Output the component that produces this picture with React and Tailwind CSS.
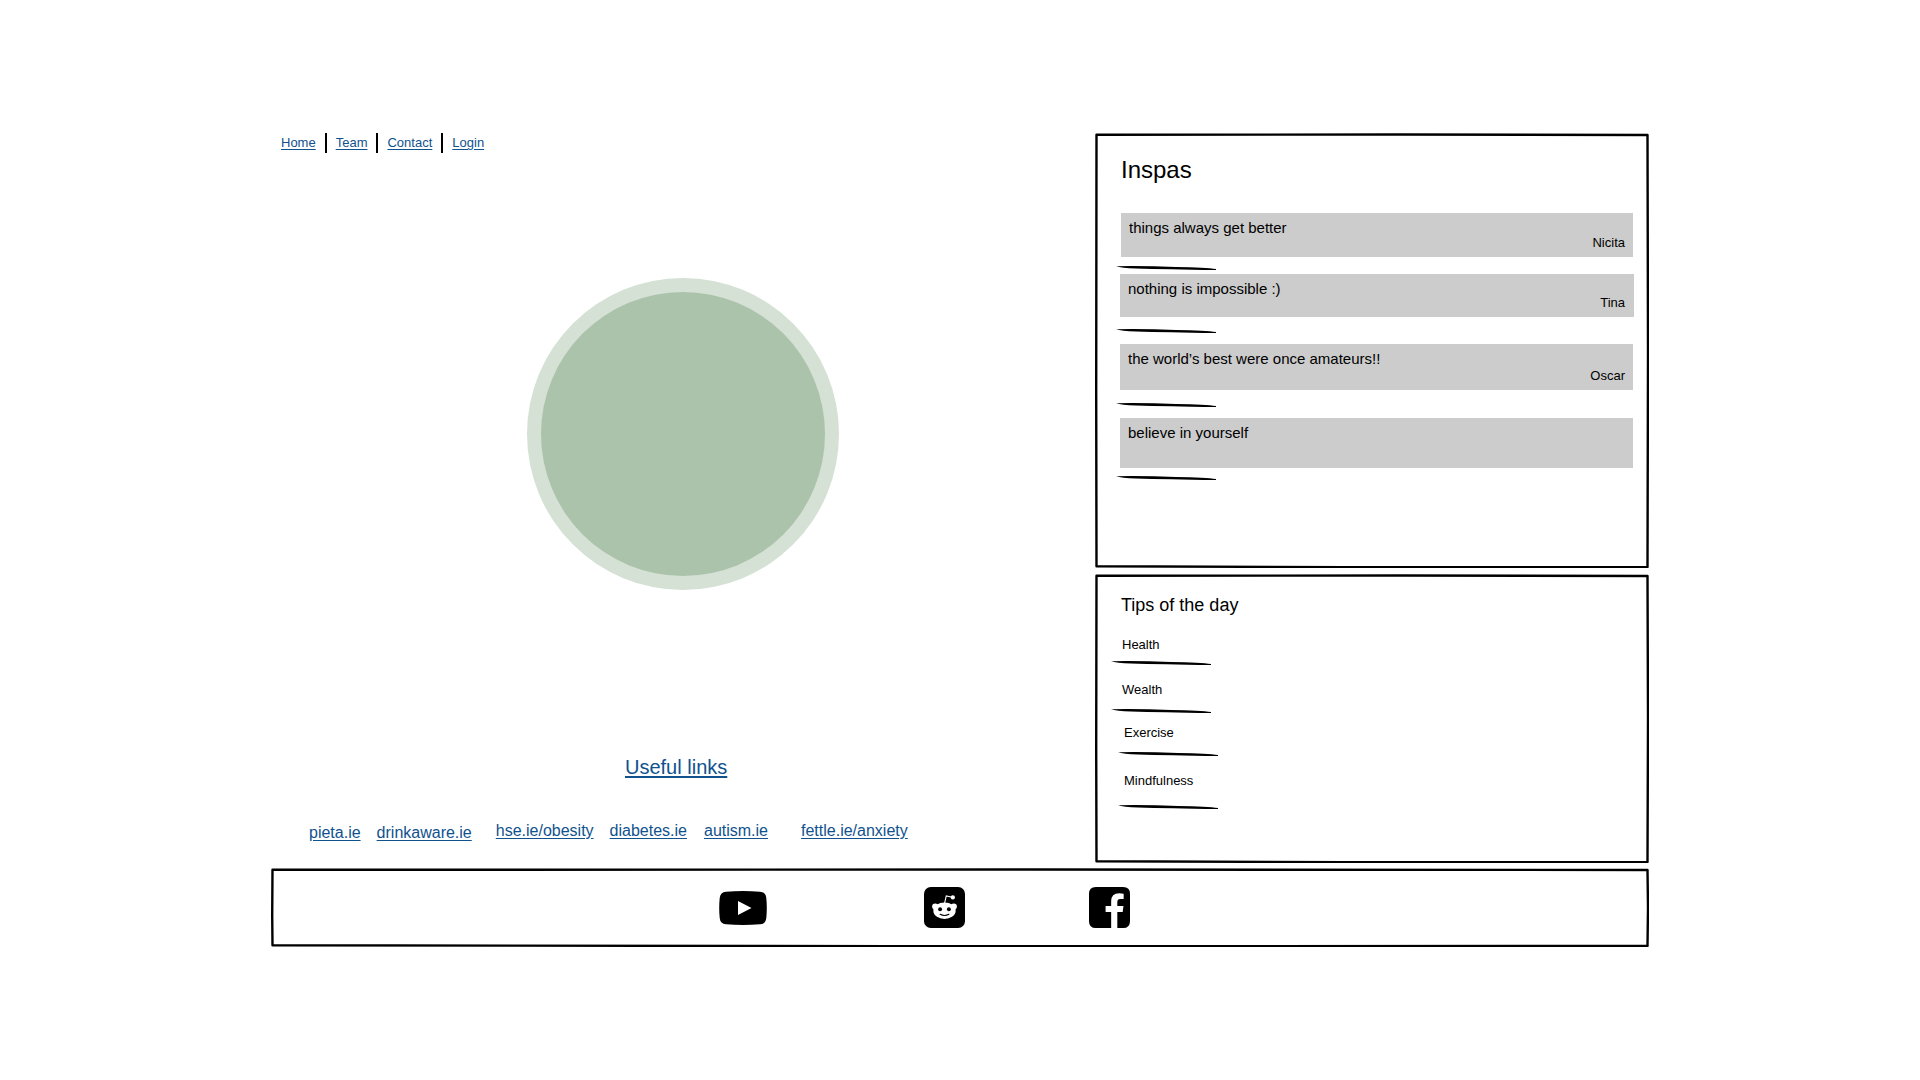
import React from "react";

const quotes = [
  { text: "things always get better", author: "Nicita", band: "mr-4 ml-[26px] h-11 px-2", note: "-mt-[2px]", gap: "h-[17px] pt-[9px]" },
  { text: "nothing is impossible :)", author: "Tina", band: "mr-[15px] ml-[25px] h-[43px] pl-2 pr-[9px]", note: "-mt-[3px]", gap: "h-[27px] pt-3" },
  { text: "the world’s best were once amateurs!!", author: "Oscar", band: "mr-4 ml-[25px] h-[46px] px-2", note: "", gap: "h-7 pt-[13px]" },
  { text: "believe in yourself", author: "", band: "mr-4 ml-[25px] h-[50px] px-2", note: "", gap: "pt-2" },
];

const tips = [
  { name: "Health", row: "h-[45px]", label: "h-6 pl-[27px]", rule: "ml-4" },
  { name: "Wealth", row: "h-[43px]", label: "h-[27px] pl-[27px]", rule: "ml-4" },
  { name: "Exercise", row: "h-12", label: "h-[27px] pl-[29px]", rule: "ml-[23px]" },
  { name: "Mindfulness", row: "h-12", label: "h-8 pl-[29px]", rule: "ml-[23px]" },
];

const nav = ["Home", "Team", "Contact", "Login"];

const links = [
  { name: "pieta.ie", place: "mt-[2px]" },
  { name: "drinkaware.ie", place: "mt-[2px] ml-4" },
  { name: "hse.ie/obesity", place: "ml-6" },
  { name: "diabetes.ie", place: "ml-4" },
  { name: "autism.ie", place: "ml-[17px]" },
  { name: "fettle.ie/anxiety", place: "ml-[33px]" },
];

function SketchFrame({ width, height }) {
  const w = width;
  const h = height;
  return (
    <svg className="pointer-events-none absolute inset-0 h-full w-full" viewBox={`0 0 ${w} ${h}`} preserveAspectRatio="none" aria-hidden="true">
      <path
        d={`M1.5 1.800 Q${w * 0.3} 1 ${w * 0.55} 1.500 T${w - 1.5} 2 L${w - 1} ${h * 0.5} L${w - 1.5} ${h - 1} Q${w * 0.6} ${h - 0.6} ${w * 0.45} ${h - 0.8} T1.500 ${h - 1.8} L1.200 ${h * 0.6} Z`}
        fill="none" stroke="#000" strokeWidth="2.4" strokeLinejoin="round" />
    </svg>
  );
}

function SketchRule({ className }) {
  return (
    <svg className={`block h-1 w-[100px] ${className}`} viewBox="0 0 100 4" aria-hidden="true">
      <path d="M0 .2 Q30 -.2 60 .9 Q90 1.300 100 3 V4 Q50 3.200 20 2.400 Q5 2 0 .2Z" fill="#000" />
    </svg>
  );
}

function YouTubeIcon() {
  return (
    <svg className="block h-[34px] w-12" viewBox="0 0 48 34" aria-hidden="true">
      <path fillRule="evenodd" d="M7 .7Q24-.5 41 .7 46.700 1 47.300 7q1 10 0 20-.6 6-6.300 6.300-17 1.200-34 0Q1.300 33 .7 27-.3 17 .7 7 1.300 1 7 .7ZM19 10v14l13.500-7Z" />
    </svg>
  );
}

function RedditIcon() {
  return (
    <svg className="block h-[41px] w-[41px]" viewBox="0 0 42 42" aria-hidden="true">
      <rect width="42" height="42" rx="7" />
      <path d="M21 17 22.800 9.200 28 10.300" fill="none" stroke="#fff" strokeWidth="1.100" />
      <g fill="#fff">
        <circle cx="29.500" cy="10.700" r="2.200" />
        <circle cx="11.500" cy="20" r="3.200" />
        <circle cx="30.500" cy="20" r="3.200" />
        <ellipse cx="21" cy="24.300" rx="11.400" ry="8.500" />
      </g>
      <circle cx="16.500" cy="22.800" r="2" />
      <circle cx="25.500" cy="22.800" r="2" />
      <path d="M16.500 28Q21 30.500 25.500 28" fill="none" stroke="#000" strokeWidth="1.100" strokeLinecap="round" />
    </svg>
  );
}

function FacebookIcon() {
  return (
    <svg className="block h-[41px] w-[41px]" viewBox="0 0 42 42" aria-hidden="true">
      <path d="M7 0h28q7 0 7 7v28q0 7-7 7h-6V25.700h5.500l.8-6.300H29v-4q0-3 3-3h3.500V6.800q-2-.3-4.500-.3-8.300 0-8.300 8.200v4.700H17v6.300h5.700V42H7q-7 0-7-7V7q0-7 7-7Z" />
    </svg>
  );
}

export default function App() {
  return (
    <div className="min-h-screen bg-white pt-[133px] font-['Liberation_Sans',Arial,sans-serif] text-black">
      <div className="mx-auto w-full max-w-[1378px]">
        <div className="grid grid-cols-[minmax(0,824fr)_minmax(0,554fr)]">
          <main className="flex flex-col">
            <nav className="flex h-5 items-center pl-[10px] text-[13px] leading-5 text-[#10528e]">
              {nav.map((item, i) => (
                <React.Fragment key={item}>
                  {i > 0 && <span className="mx-[9px] h-5 w-[2px] bg-black" />}
                  <a href="#" className="underline underline-offset-2">{item}</a>
                </React.Fragment>
              ))}
            </nav>

            <div className="mt-[125px] ml-64 flex size-[312px] items-center justify-center rounded-full bg-[#d5e1d5]">
              <div className="size-[284px] rounded-full bg-[#abc3ab]" />
            </div>

            <h2 className="mt-[165px] pl-[354px] text-xl leading-6 text-[#10528e]">
              <a href="#" className="underline underline-offset-2">Useful links</a>
            </h2>
            <div className="mt-10 flex items-start pl-[38px] text-base leading-6 text-[#10528e]">
              {links.map((link) => (
                <a key={link.name} href="#" className={`underline underline-offset-2 ${link.place}`}>{link.name}</a>
              ))}
            </div>
          </main>

          <aside className="flex flex-col gap-[6px]">
            <section className="relative min-h-[435px] pt-[23px]">
              <SketchFrame width={554} height={435} />
              <h1 className="h-[57px] pl-[26px] text-2xl leading-7">Inspas</h1>
              <ul>
                {quotes.map((q) => (
                  <li key={q.text}>
                    <div className={`bg-[#cccccc] pt-[6px] ${q.band}`}>
                      <p className="text-[15px] leading-[18px]">{q.text}</p>
                      <p className={`text-right text-[13px] leading-4 ${q.note}`}>{q.author}</p>
                    </div>
                    <div className={q.gap}><SketchRule className="ml-[21px]" /></div>
                  </li>
                ))}
              </ul>
            </section>

            <section className="relative min-h-[289px] pt-[19px]">
              <SketchFrame width={554} height={289} />
              <h2 className="h-11 pl-[26px] text-lg leading-6">Tips of the day</h2>
              <ul>
                {tips.map((t) => (
                  <li key={t.name} className={t.row}>
                    <p className={`text-[13px] leading-4 ${t.label}`}>{t.name}</p>
                    <SketchRule className={t.rule} />
                  </li>
                ))}
              </ul>
            </section>
          </aside>
        </div>

        <footer className="relative mt-[5px] flex h-[79px] items-center pl-[448px]">
          <SketchFrame width={1378} height={79} />
          <a href="#" aria-label="YouTube"><YouTubeIcon /></a>
          <a href="#" aria-label="Reddit" className="ml-[157px]"><RedditIcon /></a>
          <a href="#" aria-label="Facebook" className="ml-[124px]"><FacebookIcon /></a>
        </footer>
      </div>
    </div>
  );
}
